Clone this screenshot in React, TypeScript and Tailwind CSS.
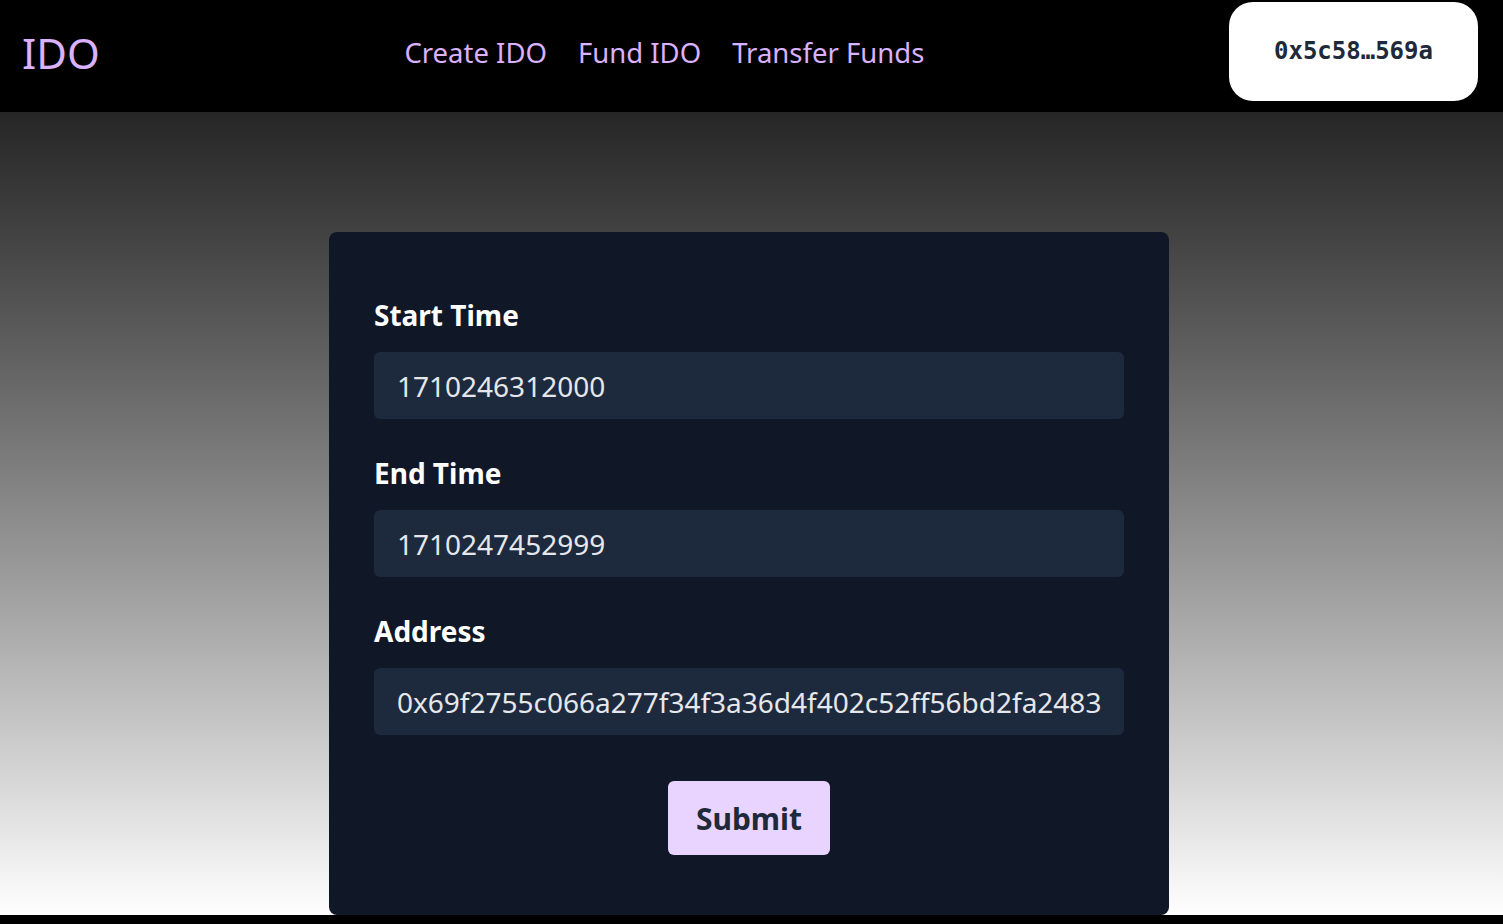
import React from 'react';

const fields = [
  { label: 'Start Time', value: '1710246312000' },
  { label: 'End Time', value: '1710247452999' },
  { label: 'Address', value: '0x69f2755c066a277f34f3a36d4f402c52ff56bd2fa2483' },
];

const App = () => {
  return (
    <div className="h-screen overflow-hidden bg-black" style={{ fontFamily: '"Noto Sans", "Open Sans", sans-serif' }}>
      <header className="flex h-[112px] items-center justify-between bg-black pl-[22px] pr-[25px]">
        <h1 className="mb-[6px] text-[42px] leading-none text-purple-300">IDO</h1>
        <nav className="mb-[6px] flex items-center gap-[31px] text-[27.5px] text-purple-300">
          <a href="#">Create IDO</a>
          <a href="#">Fund IDO</a>
          <a href="#">Transfer Funds</a>
        </nav>
        <button className="mb-[10px] h-[99px] w-[249px] rounded-[24px] bg-white text-[24px] font-bold text-gray-800" style={{ fontFamily: '"DejaVu Sans Mono", monospace' }}>
          0x5c58…569a
        </button>
      </header>

      <main className="flex h-[803px] justify-center bg-gradient-to-b from-neutral-800 to-white pt-[120px] pr-[5px]">
        <form className="flex h-[683px] w-[840px] flex-col rounded-lg bg-gray-900 px-[45px] pt-[56px]">
          {fields.map((f) => (
            <div key={f.label} className="mb-[27px] flex flex-col">
              <label className="mb-[10px] text-[28px] font-bold leading-[54px] text-white">{f.label}</label>
              <input
                readOnly
                value={f.value}
                className="h-[67px] rounded-md bg-slate-800 px-[23px] text-[28px] text-gray-200 outline-none"
              />
            </div>
          ))}
          <div className="mt-[19px] flex justify-center">
            <button type="button" className="h-[74px] w-[162px] rounded-md bg-purple-200 text-[30px] font-bold text-gray-800">
              Submit
            </button>
          </div>
        </form>
      </main>
    </div>
  );
};

export default App;
